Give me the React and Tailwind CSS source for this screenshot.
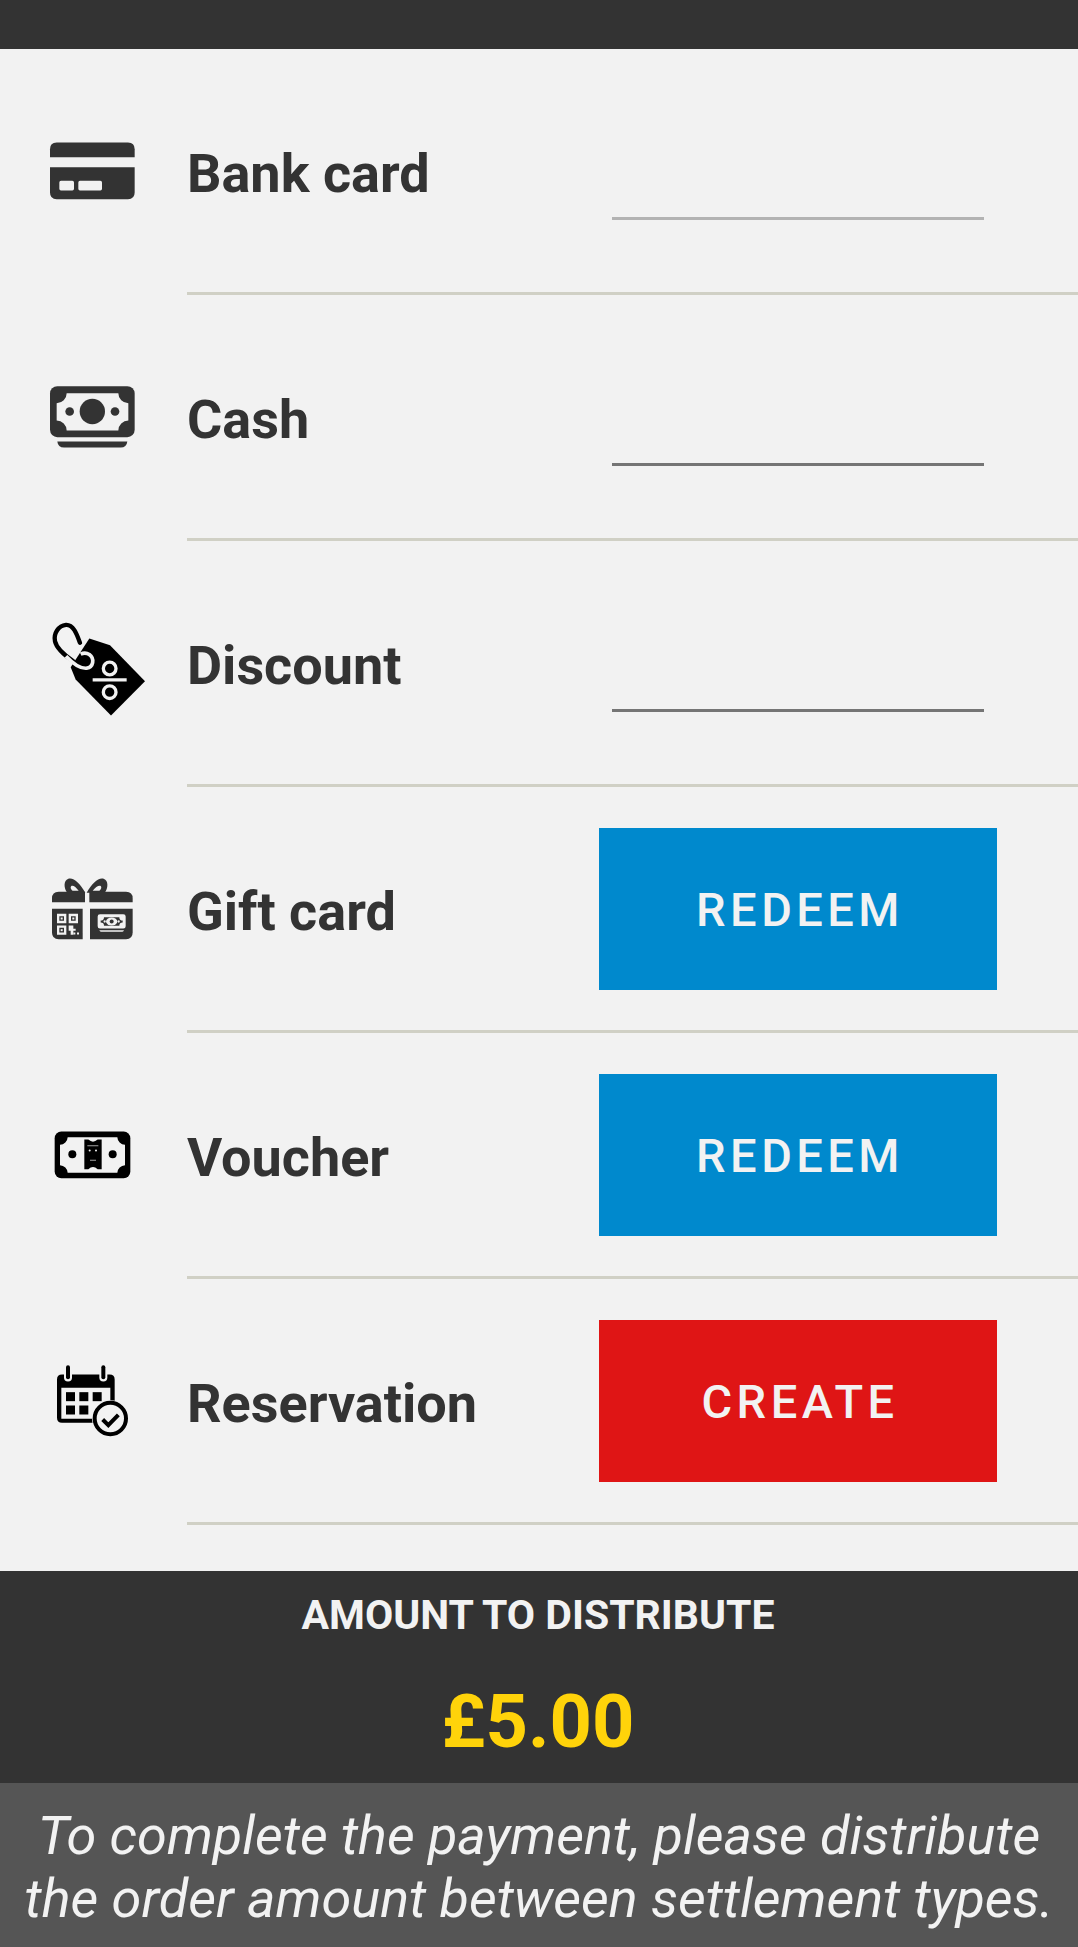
const BG = '#f2f2f2';

function CardIcon() {
    return (
        <svg width="130" height="130" viewBox="0 -43.5 390 390" fill="#333333">
            <path d="M60 110V86Q60 66 80 66H294Q314 66 314 86V110Z" />
            <path fillRule="evenodd" d="M60 140H314V216Q314 236 294 236H80Q60 236 60 216ZM93 181Q88 181 88 186V205Q88 210 93 210H127Q132 210 132 205V186Q132 181 127 181ZM150 181Q145 181 145 186V205Q145 210 150 210H211Q216 210 216 205V186Q216 181 211 181Z" />
        </svg>
    );
}

function CashIcon() {
    return (
        <svg width="130" height="130" viewBox="0 -55.5 390 390" fill="#333333">
            <rect x="60" y="47" width="254" height="153" rx="22" />
            <path fill={BG} d="M110 68H265A30 30 0 0 0 295 98V150A30 30 0 0 0 265 180H110A30 30 0 0 0 80 150V98A30 30 0 0 0 110 68Z" />
            <circle cx="187" cy="123" r="38" />
            <circle cx="119" cy="123" r="13" />
            <circle cx="255" cy="123" r="13" />
            <path d="M82 213H292Q290 231 272 231H102Q84 231 82 213Z" />
        </svg>
    );
}

function TagIcon() {
    return (
        <svg width="130" height="130" viewBox="0 -37.5 390 390" fill="#000000">
            <path d="M178 84L240 104L345 212L243 315L137 207L122 170Z" />
            <path d="M150 97C140 70 130 42 108 43C85 45 70 70 75 92C80 115 105 135 130 152" fill="none" stroke="#000000" strokeWidth="13" strokeLinecap="round" />
            <path d="M108 137C125 155 150 175 170 173C190 170 195 145 178 132C170 127 160 127 152 131" fill="none" stroke={BG} strokeWidth="11" />
            <circle cx="239" cy="174" r="19" fill="none" stroke={BG} strokeWidth="10" />
            <path d="M188 208H290" stroke={BG} strokeWidth="10" />
            <circle cx="239" cy="245" r="19" fill="none" stroke={BG} strokeWidth="10" />
        </svg>
    );
}

function GiftIcon() {
    return (
        <svg width="130" height="130" viewBox="0 -49.5 390 390" fill="#333333">
            <path fillRule="evenodd" d="M166 97C150 68 130 50 115 55C100 60 101 84 112 97ZM146 91C138 80 130 74 125 76C120 79 122 87 128 91Z" />
            <path fillRule="evenodd" d="M170 97C186 68 206 50 221 55C236 60 235 84 224 97ZM188 91C196 80 206 74 211 76C216 79 214 87 208 91Z" />
            <path d="M66 125V114Q66 94 86 94H165V125Z" />
            <path d="M178 94H288Q308 94 308 114V125H178Z" />
            <path d="M66 145H158V236H86Q66 236 66 216Z" />
            <path d="M180 145H308V216Q308 236 288 236H180Z" />
            <g fill={BG}>
                <path fillRule="evenodd" d="M81 160H109V188H81ZM88 167V181H102V167Z" />
                <path fillRule="evenodd" d="M116 160H144V188H116ZM123 167V181H137V167Z" />
                <path fillRule="evenodd" d="M81 195H109V223H81ZM88 202V216H102V202Z" />
                <rect x="92" y="171" width="6" height="6" />
                <rect x="127" y="171" width="6" height="6" />
                <rect x="92" y="206" width="6" height="6" />
                <path d="M116 195H130V205H137V211H130V223H122V211H116Z" />
                <rect x="130" y="216" width="6" height="6" />
                <rect x="141" y="216" width="6" height="6" />
                <path fillRule="evenodd" d="M210 161H280Q287 161 287 168V197Q287 204 280 204H210Q203 204 203 197V168Q203 161 210 161ZM222 170A10 10 0 0 1 212 180V186A10 10 0 0 1 222 196H268A10 10 0 0 1 278 186V180A10 10 0 0 1 268 170Z" />
                <path d="M208 209H282Q280 214 276 214H214Q210 214 208 209Z" />
                <ellipse cx="245" cy="183" rx="17" ry="12" />
                <circle cx="224" cy="183" r="3.5" />
                <circle cx="266" cy="183" r="3.5" />
            </g>
            <circle cx="245" cy="183" r="6" />
        </svg>
    );
}

function VoucherIcon() {
    return (
        <svg width="130" height="130" viewBox="0 -61.5 390 390" fill="#000000">
            <rect x="74" y="63" width="227" height="140" rx="20" />
            <path fill={BG} d="M113 80H262A24 24 0 0 0 285 103V164A24 24 0 0 0 262 187H113A24 24 0 0 0 90 164V103A24 24 0 0 0 113 80Z" />
            <circle cx="127" cy="131" r="12" />
            <circle cx="248" cy="131" r="12" />
            <path d="M163 87H175Q189 100 203 87H215V176H203Q189 163 175 176H163Z" />
            <g fill={BG}>
                <rect x="172" y="105" width="33" height="2" />
                <circle cx="179" cy="120" r="3" />
                <circle cx="198" cy="120" r="3" />
                <rect x="180" y="148" width="18" height="2" />
            </g>
        </svg>
    );
}

function CalendarIcon() {
    return (
        <svg width="130" height="130" viewBox="0 -43.5 390 390" fill="#000000">
            <path fillRule="evenodd" d="M96 72H239Q254 72 254 87V202Q254 217 239 217H96Q81 217 81 202V87Q81 72 96 72ZM94 112V205H241V112Z" />
            <rect x="102" y="38" width="24" height="55" rx="12" fill={BG} />
            <rect x="208" y="38" width="24" height="55" rx="12" fill={BG} />
            <rect x="108" y="44" width="12" height="42" rx="6" />
            <rect x="214" y="44" width="12" height="42" rx="6" />
            <rect x="108" y="125" width="27" height="27" />
            <rect x="148" y="125" width="27" height="27" />
            <rect x="188" y="125" width="27" height="27" />
            <rect x="108" y="165" width="27" height="27" />
            <rect x="148" y="165" width="27" height="27" />
            <circle cx="241" cy="204" r="55" fill={BG} />
            <circle cx="241" cy="204" r="47" fill="none" stroke="#000000" strokeWidth="12" />
            <path d="M218 207L235 224L265 193" fill="none" stroke="#000000" strokeWidth="12" />
        </svg>
    );
}

function AmountInput({ lineColor }) {
    return (
        <div className="w-[398px] h-[162px] flex flex-col justify-end px-[13px] pb-[32px]">
            <div className={`h-[3px] ${lineColor}`}></div>
        </div>
    );
}

function ActionButton({ label, color }) {
    return (
        <button className={`w-[398px] h-[162px] flex items-center justify-center pt-[4px] pl-[4px] text-[#f2f2f2] text-[47px] font-medium tracking-[0.095em] ${color}`}>
            {label}
        </button>
    );
}

const rows = [
    { label: 'Bank card', icon: <CardIcon />, control: <AmountInput lineColor="bg-[#b3b3b3]" /> },
    { label: 'Cash', icon: <CashIcon />, control: <AmountInput lineColor="bg-[#757575]" /> },
    { label: 'Discount', icon: <TagIcon />, control: <AmountInput lineColor="bg-[#757575]" /> },
    { label: 'Gift card', icon: <GiftIcon />, control: <ActionButton label="REDEEM" color="bg-[#0089cd]" /> },
    { label: 'Voucher', icon: <VoucherIcon />, control: <ActionButton label="REDEEM" color="bg-[#0089cd]" /> },
    { label: 'Reservation', icon: <CalendarIcon />, control: <ActionButton label="CREATE" color="bg-[#df1515]" /> },
];

export default function App() {
    return (
        <div className="w-[1078px] h-[1947px] flex flex-col overflow-hidden bg-[#f2f2f2] font-['Roboto',sans-serif]">
            <div className="h-[49px] bg-[#333333]"></div>

            <div className="flex-1">
                {rows.map((row) => (
                    <div key={row.label} className="h-[246px] flex">
                        <div className="w-[187px] pl-[30px] flex items-center pb-[3px]">
                            {row.icon}
                        </div>
                        <div className="flex-1 flex items-center border-b-[3px] border-[#d0d0c5] pr-[81px]">
                            <span className="flex-1 pt-[6px] text-[54px] font-bold text-[#333333]">{row.label}</span>
                            {row.control}
                        </div>
                    </div>
                ))}
            </div>

            <div className="h-[212px] bg-[#333333] flex flex-col items-center">
                <div className="mt-[19px] pr-[2px] text-[41px] leading-[50px] font-bold text-[#f2f2f2]">AMOUNT TO DISTRIBUTE</div>
                <div className="mt-[37px] pr-[2px] text-[74px] leading-[90px] font-bold text-[#ffd30a]">£5.00</div>
            </div>

            <div className="h-[164px] pt-[4px] bg-[#555555] flex items-center justify-center text-center text-[54px] leading-[63px] italic text-[#f2f2f2]">
                <p>To complete the payment, please distribute<br />the order amount between settlement types.</p>
            </div>
        </div>
    );
}
